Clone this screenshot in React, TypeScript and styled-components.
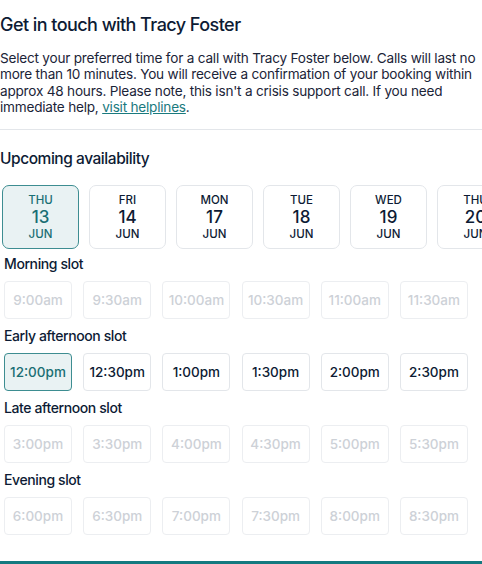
import styled, { createGlobalStyle, css } from "styled-components";
import { useState } from "react";

const GlobalStyle = createGlobalStyle`
  html, body {
    margin: 0;
    padding: 0;
    background: #ffffff;
    overflow: hidden;
  }
  body {
    font-family: "Inter", "Noto Sans", sans-serif;
    color: #0d1b34;
  }
`;

const dates = [
  { day: "THU", num: "13", month: "JUN" },
  { day: "FRI", num: "14", month: "JUN" },
  { day: "MON", num: "17", month: "JUN" },
  { day: "TUE", num: "18", month: "JUN" },
  { day: "WED", num: "19", month: "JUN" },
  { day: "THU", num: "20", month: "JUN" },
];

const groups = [
  { title: "Morning slot", times: ["9:00am", "9:30am", "10:00am", "10:30am", "11:00am", "11:30am"], open: false },
  { title: "Early afternoon slot", times: ["12:00pm", "12:30pm", "1:00pm", "1:30pm", "2:00pm", "2:30pm"], open: true },
  { title: "Late afternoon slot", times: ["3:00pm", "3:30pm", "4:00pm", "4:30pm", "5:00pm", "5:30pm"], open: false },
  { title: "Evening slot", times: ["6:00pm", "6:30pm", "7:00pm", "7:30pm", "8:00pm", "8:30pm"], open: false },
];

export default function App() {
  const [date, setDate] = useState(0);
  const [slot, setSlot] = useState("12:00pm");

  return (
    <>
      <GlobalStyle />
      <Page>
        <Header>
          <Title>Get in touch with Tracy Foster</Title>
          <Intro>
            Select your preferred time for a call with Tracy Foster below. Calls will last no
            more than 10 minutes. You will receive a confirmation of your booking within
            approx 48 hours. Please note, this isn't a crisis support call. If you need
            immediate help, <HelpLink href="#">visit helplines</HelpLink>.
          </Intro>
        </Header>

        <SectionTitle>Upcoming availability</SectionTitle>
        <DateRow>
          {dates.map((d, i) => (
            <DateCard key={i} $active={i === date} onClick={() => setDate(i)}>
              <DateSmall>{d.day}</DateSmall>
              <DateNum>{d.num}</DateNum>
              <DateSmall>{d.month}</DateSmall>
            </DateCard>
          ))}
        </DateRow>

        <Groups>
          {groups.map((g) => (
            <Group key={g.title}>
              <GroupTitle>{g.title}</GroupTitle>
              <SlotGrid>
                {g.times.map((t) => (
                  <Slot
                    key={t}
                    disabled={!g.open}
                    $active={g.open && t === slot}
                    onClick={() => setSlot(t)}
                  >
                    {t}
                  </Slot>
                ))}
              </SlotGrid>
            </Group>
          ))}
        </Groups>

        <BottomBar />
      </Page>
    </>
  );
}

const Page = styled.div`
  width: 482px;
  height: 564px;
  display: flex;
  flex-direction: column;
  overflow: hidden;
`;

const Header = styled.div`
  padding: 13px 0 14px;
  border-bottom: 1.5px solid #e3e6ea;
`;

const Title = styled.h1`
  margin: 0 0 13px;
  font-size: 18px;
  font-weight: 500;
  line-height: 24px;
  letter-spacing: -0.55px;
  color: #0d1b34;
`;

const Intro = styled.p`
  margin: 0;
  font-size: 13.6px;
  line-height: 16.3px;
  letter-spacing: -0.22px;
  color: #1b2438;
`;

const HelpLink = styled.a`
  color: #1a7a7e;
  text-decoration: underline;
`;

const SectionTitle = styled.h2`
  margin: 19px 0 16px;
  font-size: 15.5px;
  font-weight: 500;
  line-height: 20px;
  letter-spacing: -0.45px;
  color: #0d1b34;
`;

const DateRow = styled.div`
  display: flex;
  gap: 10px;
  padding-left: 2px;
  overflow: hidden;
`;

const DateCard = styled.button<{ $active: boolean }>`
  flex: 0 0 77px;
  height: 64px;
  box-sizing: border-box;
  border-radius: 7px;
  border: 1.5px solid #e3e6ea;
  background: #ffffff;
  color: #0d1b34;
  font-family: inherit;
  display: flex;
  flex-direction: column;
  align-items: center;
  justify-content: center;
  padding: 0;
  cursor: pointer;
  ${(p) =>
    p.$active &&
    css`
      border-color: #3d8d91;
      background: #e9f2f3;
      color: #1a6f74;
    `}
`;

const DateSmall = styled.span`
  font-size: 11.5px;
  font-weight: 500;
  line-height: 16px;
`;

const DateNum = styled.span`
  font-size: 17px;
  font-weight: 500;
  line-height: 18px;
`;

const Groups = styled.div`
  display: flex;
  flex-direction: column;
  gap: 8px;
  margin-top: 6px;
  padding-left: 4px;
`;

const Group = styled.div`
  display: flex;
  flex-direction: column;
  gap: 8px;
`;

const GroupTitle = styled.h3`
  margin: 0;
  font-size: 14px;
  font-weight: 500;
  line-height: 18px;
  letter-spacing: -0.4px;
  color: #0d1b34;
`;

const SlotGrid = styled.div`
  display: grid;
  grid-template-columns: repeat(6, 68px);
  column-gap: 11.2px;
`;

const Slot = styled.button<{ $active?: boolean }>`
  height: 38px;
  box-sizing: border-box;
  border-radius: 4px;
  border: 1.5px solid #e3e6ea;
  background: #ffffff;
  font-family: inherit;
  font-size: 13.5px;
  font-weight: 500;
  color: #0d1b34;
  padding: 0;
  cursor: pointer;

  &:disabled {
    color: #cdd1d7;
    border-color: #eceef1;
    cursor: default;
  }

  ${(p) =>
    p.$active &&
    css`
      border-color: #3d8d91;
      background: #e9f2f3;
      color: #1a6f74;
    `}
`;

const BottomBar = styled.div`
  margin-top: auto;
  height: 3px;
  background: #147a80;
`;
